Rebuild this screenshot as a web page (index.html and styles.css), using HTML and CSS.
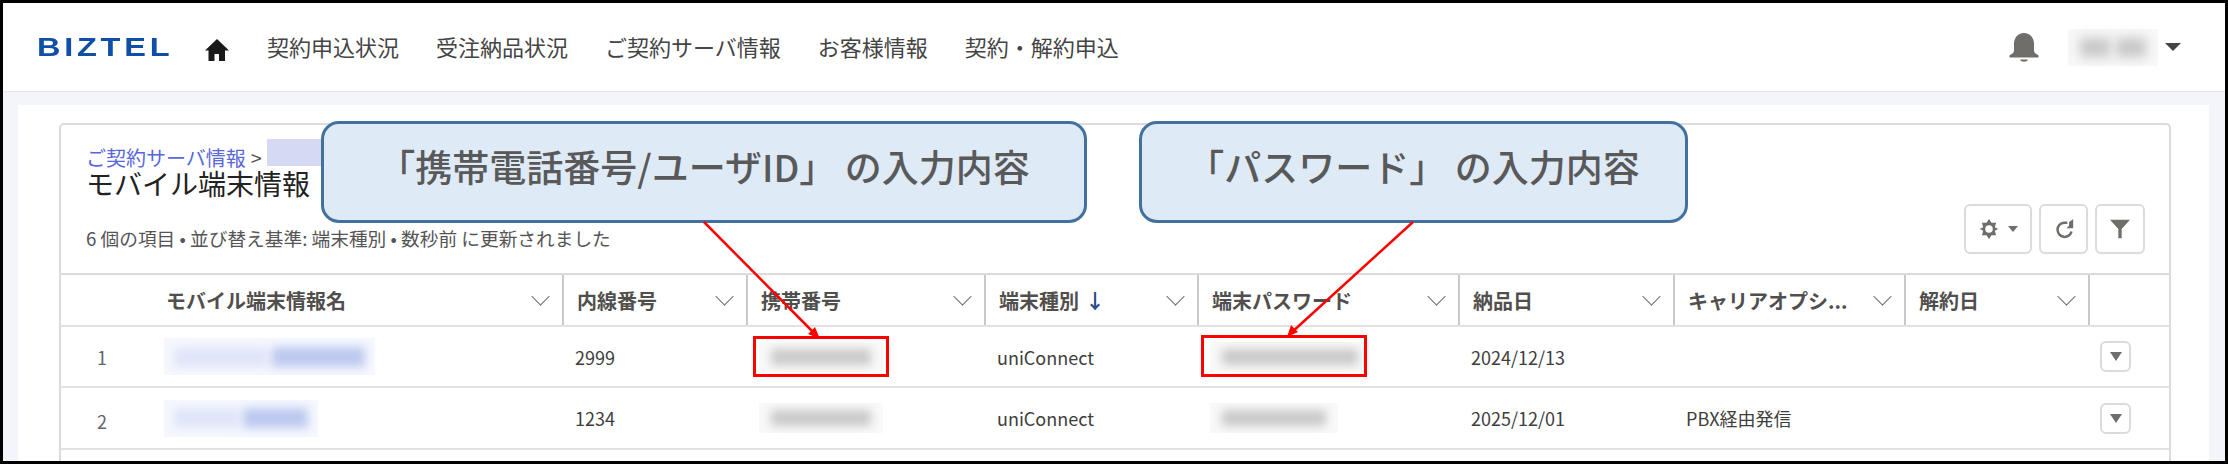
FILE: index.html
```html
<!DOCTYPE html>
<html lang="ja">
<head>
    <meta charset="UTF-8">
    <meta name="viewport" content="width=device-width, initial-scale=1.0">
    <title>モバイル端末情報</title>
    <link rel="stylesheet" href="styles.css">
</head>
<body>
    <div class="frame">
        <header class="topbar">
            <div class="logo"><span>BIZTEL</span></div>
            <svg class="home" viewBox="0 0 24 24"><path d="M12 1 0 12.500h3.500V23h6v-7h4.500v7h6V12.500H24z"/></svg>
            <nav class="nav">
                <span>契約申込状況</span>
                <span>受注納品状況</span>
                <span>ご契約サーバ情報</span>
                <span>お客様情報</span>
                <span>契約・解約申込</span>
            </nav>
            <div class="user">
                <svg class="bell" viewBox="0 0 30 29"><path d="M15 0C8.500 0 5 5 5 11v6.500c0 2-2 3.500-4 4.500-1 .5-1 2.500.5 2.500h27c1.500 0 1.500-2 .5-2.500-2-1-4-2.500-4-4.500V11C25 5 21.500 0 15 0zM11 26.500h8c-.5 3-7.500 3-8 0z"/></svg>
                <div class="user-name"><i></i><i></i></div>
                <span class="caret"></span>
            </div>
        </header>
        <main class="page">
            <section class="panel">
                <div class="card">
                    <div class="card-head">
                        <div class="head-text">
                            <div class="crumbs"><a>ご契約サーバ情報</a> &gt; <i class="blur-crumb"></i></div>
                            <h1>モバイル端末情報</h1>
                            <p class="status">6 個の項目 • 並び替え基準: 端末種別 • 数秒前 に更新されました</p>
                        </div>
                        <div class="tools">
                            <button class="tool tool-gear">
                                <svg viewBox="0 0 24 24"><path fill-rule="evenodd" d="M12 0l3 4.500h5.500L19 10l4 2-4 2 1.500 5.500H15L12 24l-3-4.500H3.500L5 14l-4-2 4-2-1.500-5.500H9zM12 7.500a4.500 4.500 0 1 0 0 9 4.500 4.500 0 0 0 0-9z"/></svg>
                                <span class="caret small"></span>
                            </button>
                            <button class="tool tool-redo">
                                <svg viewBox="0 0 24 24"><path d="M21 15a8.500 8.500 0 1 1-9-10.500h4" fill="none" stroke="#706e6b" stroke-width="3"/><path d="M23 0v11H15l3-3V4z"/></svg>
                            </button>
                            <button class="tool tool-filter">
                                <svg viewBox="0 0 24 24"><path d="M0 1h24l-10 11v11h-4V12z"/></svg>
                            </button>
                        </div>
                    </div>
                    <div class="table">
                        <div class="row head">
                            <div class="cell"></div>
                            <div class="cell th">モバイル端末情報名<b></b></div>
                            <div class="cell th">内線番号<b></b></div>
                            <div class="cell th">携帯番号<b></b></div>
                            <div class="cell th">端末種別 <em>↓</em><b></b></div>
                            <div class="cell th">端末パスワード<b></b></div>
                            <div class="cell th">納品日<b></b></div>
                            <div class="cell th">キャリアオプシ...<b></b></div>
                            <div class="cell th">解約日<b></b></div>
                            <div class="cell th"></div>
                        </div>
                        <div class="row">
                            <div class="cell num">1</div>
                            <div class="cell"><div class="smudge link wide"><i class="pale"></i><i></i></div></div>
                            <div class="cell">2999</div>
                            <div class="cell"><div class="smudge phone"><i></i></div></div>
                            <div class="cell">uniConnect</div>
                            <div class="cell"><div class="smudge pass"><i></i></div></div>
                            <div class="cell">2024/12/13</div>
                            <div class="cell"></div>
                            <div class="cell"></div>
                            <div class="cell action"><button class="menu-btn"><span class="caret"></span></button></div>
                        </div>
                        <div class="row">
                            <div class="cell num second">2</div>
                            <div class="cell"><div class="smudge link narrow"><i class="pale"></i><i></i></div></div>
                            <div class="cell">1234</div>
                            <div class="cell"><div class="smudge phone"><i></i></div></div>
                            <div class="cell">uniConnect</div>
                            <div class="cell"><div class="smudge pass short"><i></i></div></div>
                            <div class="cell">2025/12/01</div>
                            <div class="cell">PBX経由発信</div>
                            <div class="cell"></div>
                            <div class="cell action"><button class="menu-btn"><span class="caret"></span></button></div>
                        </div>
                    </div>
                </div>
            </section>
        </main>

        <!-- 注釈 -->
        <div class="callout callout-phone">「携帯電話番号/ユーザID」 の入力内容</div>
        <div class="callout callout-pass">「パスワード」 の入力内容</div>
        <div class="redbox redbox-phone"></div>
        <div class="redbox redbox-pass"></div>
        <svg class="arrows" viewBox="0 0 2228 464">
            <path d="M704 222 816 335M1413 222 1291 333" stroke="#ff0000" stroke-width="2.500" fill="none"/>
            <path d="M820 339l-12-5 7-7zM1287 337l4-12 7 7z" fill="#ff0000"/>
        </svg>
    </div>
</body>
</html>
```
FILE: styles.css
```css
* {
    box-sizing: border-box;
}
html, body {
    margin: 0;
    padding: 0;
}
body {
    width: 2228px;
    height: 464px;
    overflow: hidden;
    font-family: "Noto Sans CJK JP", "Noto Sans", sans-serif;
    color: #3e3e3c;
}
.frame {
    position: relative;
    width: 2228px;
    height: 464px;
    border: 3px solid #000;
    background: #f3f5fa;
    overflow: hidden;
}
.topbar {
    display: flex;
    align-items: center;
    height: 89px;
    padding: 0 44px 0 34px;
    background: #fff;
    border-bottom: 1px solid #e6e6e6;
}
.logo {
    width: 168px;
    font-family: "Liberation Sans", sans-serif;
    font-size: 26px;
    font-weight: 700;
    letter-spacing: 3px;
    color: #0f4fa8;
}
.logo span {
    display: inline-block;
    transform: scaleX(1.25);
    transform-origin: left center;
}
.home {
    width: 24px;
    height: 24px;
    margin-top: 6px;
    fill: #1a1a1a;
}
.nav {
    display: flex;
    gap: 37px;
    margin: 0 0 2px 38px;
    font-size: 22px;
    color: #444;
}
.user {
    display: flex;
    align-items: center;
    margin-left: auto;
}
.bell {
    width: 30px;
    height: 29px;
    fill: #706e6b;
}
.user-name {
    display: flex;
    gap: 6px;
    width: 90px;
    height: 37px;
    margin-left: 29px;
    padding: 9px 12px;
    background: #f8f8f8;
}
.user-name i {
    flex: 1;
    background: #c6c6c6;
    filter: blur(6px);
}
.caret {
    display: inline-block;
    width: 0;
    height: 0;
    border-left: 8px solid transparent;
    border-right: 8px solid transparent;
    border-top: 8px solid #444;
}
.user .caret {
    margin-left: 7px;
}
.page {
    padding: 13px 16px 0 15px;
}
.panel {
    height: 360px;
    padding: 18px 38px 0 41px;
    background: #fff;
}
.card {
    height: 342px;
    background: #fff;
    border: 2px solid #dddbda;
    border-bottom: 0;
    border-radius: 5px 5px 0 0;
}
.card-head {
    display: flex;
    justify-content: space-between;
    height: 148px;
    padding: 22px 24px 0 25px;
}
.crumbs {
    display: flex;
    align-items: center;
    gap: 5px;
    height: 21px;
    margin-bottom: -2px;
    font-size: 20px;
    line-height: 21px;
    color: #555;
}
.crumbs a {
    color: #5867dd;
}
.blur-crumb {
    display: block;
    align-self: flex-start;
    width: 60px;
    height: 27px;
    margin-top: -8px;
    background: #d5daf2;
}
h1 {
    margin: 0;
    font-size: 28px;
    font-weight: 400;
    line-height: 34px;
    color: #222;
}
.status {
    margin: 25px 0 0;
    font-size: 18.700px;
    line-height: 26px;
    color: #555;
}
.tools {
    display: flex;
    gap: 7px;
    margin-top: 57px;
}
.tool {
    display: flex;
    align-items: center;
    justify-content: center;
    gap: 9px;
    width: 50px;
    height: 50px;
    padding: 0;
    background: #fff;
    border: 2px solid #dddbda;
    border-radius: 6px;
}
.tool-gear {
    width: 68px;
}
.tool-redo {
    width: 49px;
}
.tool svg {
    width: 20px;
    height: 20px;
    fill: #706e6b;
}
.caret.small {
    border-left-width: 5px;
    border-right-width: 5px;
    border-top: 6px solid #706e6b;
}
.table {
    border-top: 2px solid #dddbda;
}
.row {
    display: grid;
    grid-template-columns: 102px 399px 184px 238px 213px 261px 215px 231px 184px 81px;
    height: 61px;
    border-bottom: 2px solid #e2e2e2;
}
.row:last-child {
    height: 62px;
}
.row.head {
    height: 52px;
}
.cell {
    display: flex;
    align-items: center;
    padding-left: 13px;
    font-size: 18px;
    color: #3e3e3c;
}
.th {
    position: relative;
    font-size: 20px;
    font-weight: 700;
    border-left: 2px solid #c9c9c9;
    color: #514f4d;
}
.head .cell:nth-child(2) {
    padding-left: 3px;
    border-left: 0;
}
.th em {
    margin-left: 6px;
    font-style: normal;
    color: #2d4a85;
}
.th b {
    position: absolute;
    right: 15px;
    top: 15px;
    width: 13px;
    height: 13px;
    border-right: 1.500px solid #706e6b;
    border-bottom: 1.500px solid #706e6b;
    transform: rotate(45deg);
}
.head .cell:last-child b {
    display: none;
}
.num {
    padding-left: 36px;
    color: #666;
}
.num.second {
    padding-top: 6px;
}
.row:not(.head) .cell:nth-child(2) {
    padding-left: 1px;
}

/* ぼかし部分 */
.smudge {
    display: flex;
    align-items: center;
    height: 30px;
    padding: 0 12px;
    overflow: hidden;
    background: #f9f9f9;
}
.smudge i {
    flex: 1;
    height: 16px;
    background: #c9c9c9;
    filter: blur(5px);
}
.smudge.link {
    gap: 4px;
    height: 37px;
    padding: 0 10px;
    background: #f6f8fe;
}
.smudge.link i {
    height: 20px;
    background: #bcc8ef;
}
.smudge.link i.pale {
    background: #dfe5f9;
}
.link.wide {
    width: 211px;
}
.link.narrow {
    width: 154px;
}
.phone {
    width: 124px;
}
.pass {
    width: 160px;
}
.pass.short {
    width: 128px;
}
.action {
    padding: 0;
    justify-content: flex-start;
    padding-left: 12px;
}
.menu-btn {
    display: flex;
    align-items: center;
    justify-content: center;
    width: 31px;
    height: 31px;
    padding: 0;
    background: #fff;
    border: 2px solid #dddbda;
    border-radius: 6px;
}
.menu-btn .caret {
    border-left-width: 6px;
    border-right-width: 6px;
    border-top: 9px solid #706e6b;
}
.callout {
    position: absolute;
    top: 118px;
    display: flex;
    align-items: center;
    justify-content: center;
    height: 102px;
    padding-bottom: 12px;
    font-size: 37px;
    font-weight: 500;
    white-space: pre;
    color: #595959;
    background: #deeaf6;
    border: 3px solid #41719c;
    border-radius: 18px;
}
.callout-phone {
    left: 318px;
    width: 766px;
}
.callout-pass {
    left: 1136px;
    width: 549px;
}
.redbox {
    position: absolute;
    border: 3px solid #ff0000;
}
.redbox-phone {
    left: 750px;
    top: 333px;
    width: 136px;
    height: 41px;
}
.redbox-pass {
    left: 1198px;
    top: 332px;
    width: 166px;
    height: 42px;
}
.arrows {
    position: absolute;
    left: -3px;
    top: -3px;
    width: 2228px;
    height: 464px;
}
```
